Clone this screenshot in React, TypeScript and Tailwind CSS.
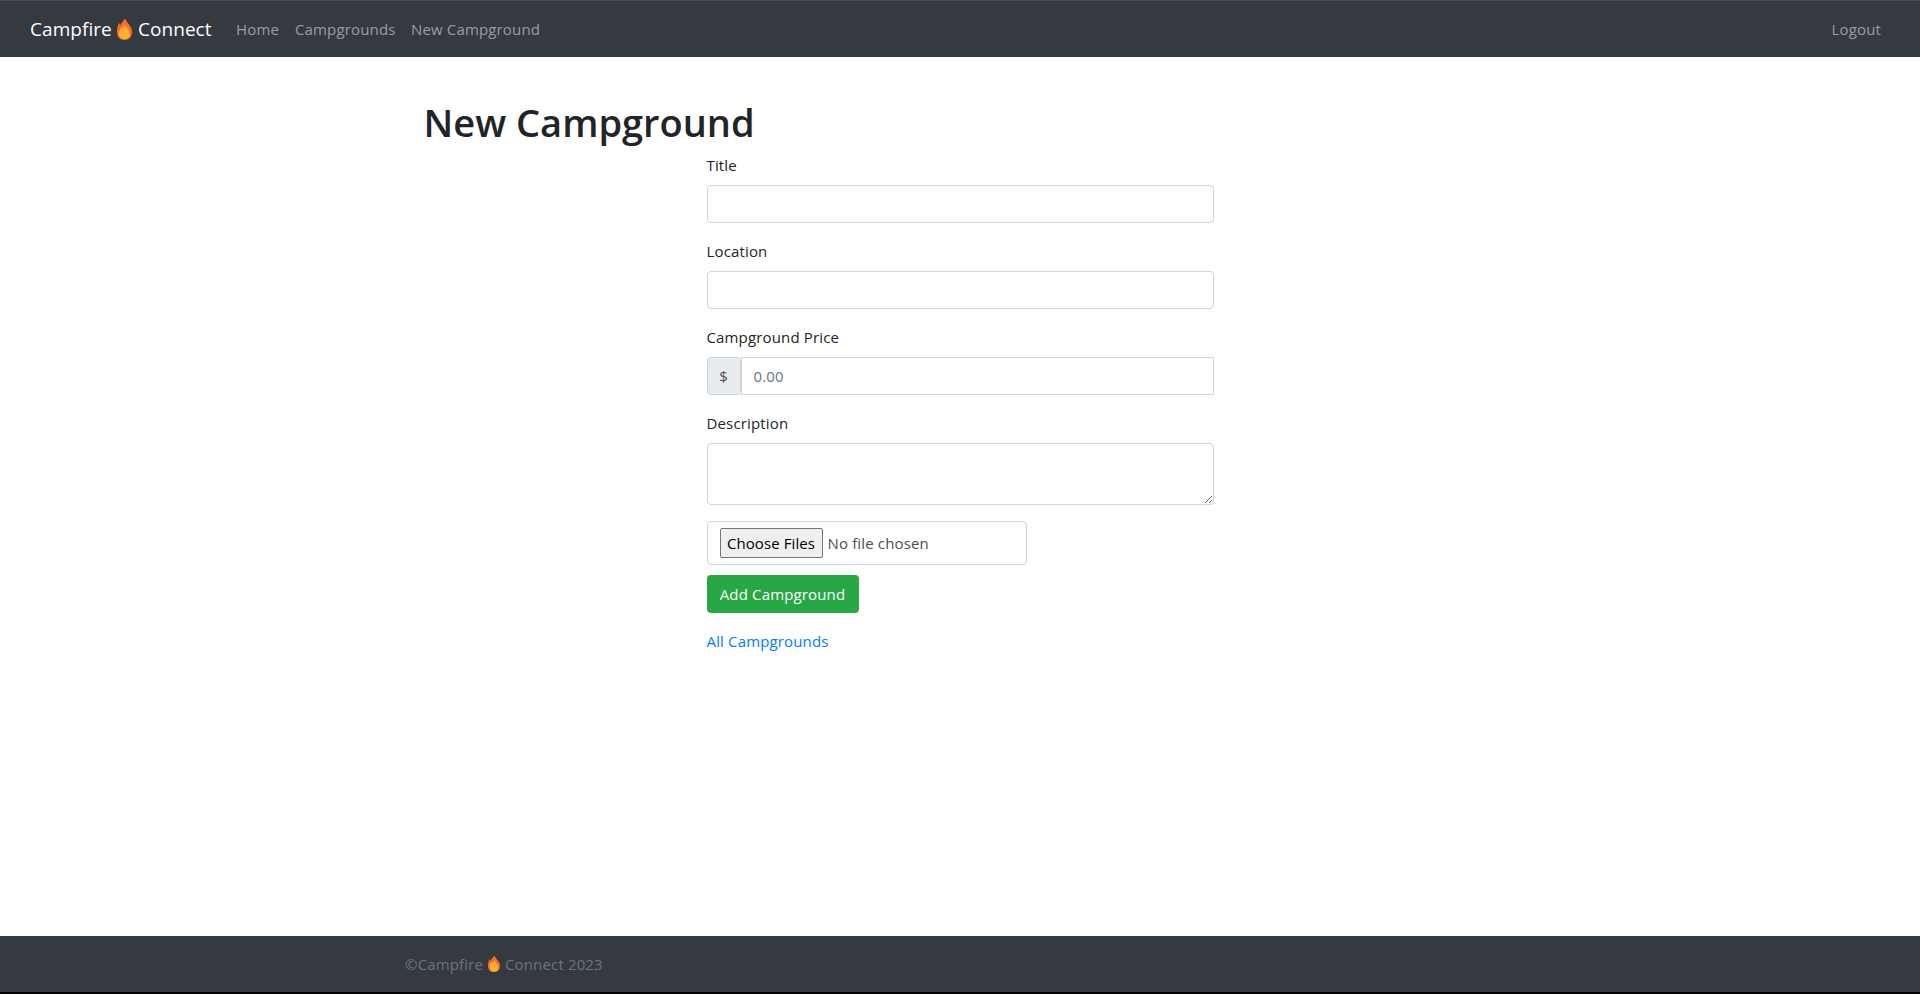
import type { ReactNode } from "react";

function Flame({ className }: { className: string }) {
  return (
    <svg viewBox="0 0 15 21" preserveAspectRatio="none" className={className} aria-hidden="true">
      <path
        d="M7.8 0C8.600 0 9 1.200 9.600 2.200C10.400 3.600 11.400 4.600 12.200 5.700C14 8 15 10.300 15 13C15 18 12 21 7.500 21S0 18 0 13C0 9.700 .7 7 1.800 4.600C2.100 4.200 2.500 4.300 2.600 4.700L3.200 6.400C4.200 4.600 5.600 2.400 7.800 0z"
        fill="#fb6b28"
      />
      <path
        d="M7.900 5.800C8.500 7.800 13 10.500 13 15C13 18.300 10.700 20.200 7.500 20.200S2 18.300 2 14.700C2 12 3.200 9.800 4.600 8.600L5.200 9.300C6.200 8.500 7.300 7.300 7.900 5.800z"
        fill="#ffb02e"
      />
    </svg>
  );
}

function NavLink({ className = "", children }: { className?: string; children: ReactNode }) {
  return (
    <a href="#" className={`block whitespace-nowrap leading-6 text-[#9a9da0] ${className}`}>
      {children}
    </a>
  );
}

function Field({ label, children }: { label: string; children: ReactNode }) {
  return (
    <div className="mb-4">
      <label className="mb-2 block h-6 leading-6">{label}</label>
      {children}
    </div>
  );
}

const control = "block w-full border border-[#ced4da] bg-white px-3 outline-none";

export default function App() {
  return (
    <div className="flex h-[994px] flex-col overflow-hidden bg-white font-['Open_Sans','Noto_Sans',sans-serif] text-[15px] tracking-[0.15px] text-[#212529]">
      <nav className="flex h-[57px] shrink-0 items-center border-t border-[#454a52] bg-[#343a40] pr-[39px] pl-[30px]">
        <a
          href="#"
          className="flex w-[206px] items-center whitespace-nowrap text-[19px] leading-[30px] tracking-[0.05px] text-white"
        >
          <span className="w-[87px]">Campfire</span>
          <Flame className="h-[21px] w-[15px]" />
          <span className="ml-1.5">Connect</span>
        </a>
        <NavLink className="w-[59px]">Home</NavLink>
        <NavLink className="w-[116px]">Campgrounds</NavLink>
        <NavLink>New Campground</NavLink>
        <NavLink className="ml-auto">Logout</NavLink>
      </nav>

      <main className="flex-1 pt-[38px]">
        <div className="mx-auto w-[1073px]">
          <h1 className="mb-1 whitespace-nowrap text-[38px] leading-[54px] font-semibold tracking-normal">
            New Campground
          </h1>
          <form className="mx-auto w-[507px]" onSubmit={(e) => e.preventDefault()}>
            <Field label="Title">
              <input className={`${control} h-[38px] rounded`} />
            </Field>
            <Field label="Location">
              <input className={`${control} h-[38px] rounded`} />
            </Field>
            <Field label="Campground Price">
              <div className="flex">
                <span className="flex h-[38px] w-[34px] shrink-0 items-center justify-center rounded border border-[#ced4da] bg-[#e9ecef] text-[#495057]">
                  $
                </span>
                <input
                  className={`${control} h-[38px] tracking-[0.15px] placeholder:text-[#6c757d]`}
                  placeholder="0.00"
                />
              </div>
            </Field>
            <Field label="Description">
              <textarea className={`${control} h-[62px] resize rounded py-1.5`} />
            </Field>
            <div className="flex h-11 w-[320px] items-center rounded border border-[#ced4da] px-3">
              <button
                type="button"
                className="h-[30px] w-[103px] rounded-[2px] border border-[#767676] bg-[#efefef] whitespace-nowrap tracking-[0.1px] text-black"
              >
                Choose Files
              </button>
              <span className="ml-[5px] text-[#495057]">No file chosen</span>
            </div>
            <button
              type="submit"
              className="mt-2.5 block h-[38px] w-[152px] rounded bg-[#28a745] whitespace-nowrap tracking-[0.15px] text-white"
            >
              Add Campground
            </button>
            <a href="#" className="mt-4 inline-block leading-6 text-[#007bff]">
              All Campgrounds
            </a>
          </form>
        </div>
      </main>

      <footer className="flex h-[58px] shrink-0 items-center border-b-2 border-black bg-[#343a40] pl-[405px] whitespace-nowrap text-[#6c757d]">
        <span className="w-[83px]">©Campfire</span>
        <Flame className="h-4 w-3" />
        <span className="ml-[5px]">Connect 2023</span>
      </footer>
    </div>
  );
}
